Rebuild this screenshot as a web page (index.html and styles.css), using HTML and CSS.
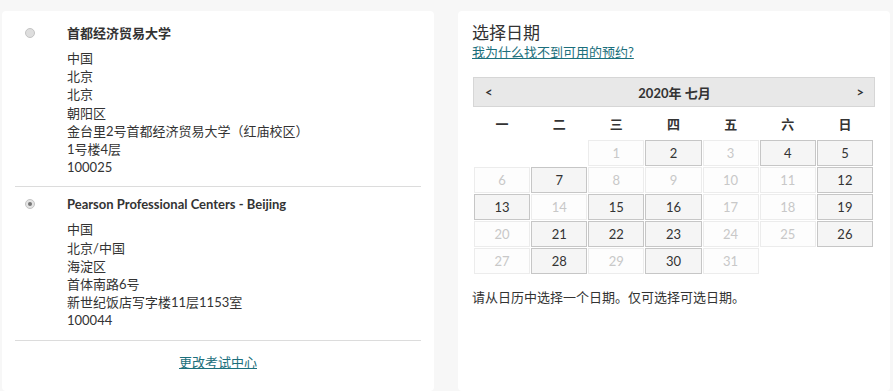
FILE: index.html
```html
<!DOCTYPE html>
<html lang="zh-CN">
<head>
  <meta charset="UTF-8" />
  <meta name="viewport" content="width=device-width, initial-scale=1.0"/>
  <title>选择日期</title>
  <link rel="stylesheet" href="styles.css">
</head>
<body>

  <div class="page">
    <!-- 考试中心 -->
    <div class="panel centers">
      <div class="center-item">
        <span class="radio"></span>
        <div class="center-info">
          <div class="center-name">首都经济贸易大学</div>
          <div class="center-address">
            中国<br>
            北京<br>
            北京<br>
            朝阳区<br>
            金台里2号首都经济贸易大学（红庙校区）<br>
            1号楼4层<br>
            100025
          </div>
        </div>
      </div>

      <div class="center-item second">
        <span class="radio checked"></span>
        <div class="center-info">
          <div class="center-name">Pearson Professional Centers - Beijing</div>
          <div class="center-address">
            中国<br>
            北京/中国<br>
            海淀区<br>
            首体南路6号<br>
            新世纪饭店写字楼11层1153室<br>
            100044
          </div>
        </div>
      </div>

      <div class="change-link"><a href="#">更改考试中心</a></div>
    </div>

    <!-- 日历 -->
    <div class="panel dates">
      <div class="dates-title">选择日期</div>
      <a class="help-link" href="#">我为什么找不到可用的预约?</a>

      <div class="calendar">
        <div class="cal-head">
          <span class="cal-nav">&lt;</span>
          <span class="cal-month">2020年 七月</span>
          <span class="cal-nav">&gt;</span>
        </div>

        <div class="cal-weekdays">
          <span>一</span><span>二</span><span>三</span><span>四</span><span>五</span><span>六</span><span>日</span>
        </div>

        <div class="cal-days">
          <span class="blank"></span><span class="blank"></span>
          <span class="day off">1</span><span class="day">2</span><span class="day off">3</span><span class="day">4</span><span class="day">5</span>
          <span class="day off">6</span><span class="day">7</span><span class="day off">8</span><span class="day off">9</span><span class="day off">10</span><span class="day off">11</span><span class="day">12</span>
          <span class="day">13</span><span class="day off">14</span><span class="day">15</span><span class="day">16</span><span class="day off">17</span><span class="day off">18</span><span class="day">19</span>
          <span class="day off">20</span><span class="day">21</span><span class="day">22</span><span class="day">23</span><span class="day off">24</span><span class="day off">25</span><span class="day">26</span>
          <span class="day off">27</span><span class="day">28</span><span class="day off">29</span><span class="day">30</span><span class="day off">31</span>
        </div>
      </div>

      <p class="cal-hint">请从日历中选择一个日期。仅可选择可选日期。</p>
    </div>
  </div>

</body>
</html>
```

FILE: styles.css
```css
body {
  margin: 0;
  background: #f7f7f7;
  font-family: 'Lato', 'Noto Sans CJK SC', sans-serif;
  font-size: 13px;
  color: #333;
  overflow: hidden;
}

a {
  color: #1b6f7c;
  text-decoration: underline;
}

.page {
  display: flex;
  gap: 24px;
  padding: 11px 0 0 2px;
}

.panel {
  width: 432px;
  height: 380px;
  box-sizing: border-box;
  background: white;
  border-radius: 4px;
}

/* 左侧：考试中心 */
.centers {
  padding: 4px 13px 0;
}

.center-item {
  display: flex;
  padding: 9px 0 10px;
  border-bottom: 1px solid #dcdcdc;
}

.center-item.second {
  padding-top: 8px;
}

.radio {
  flex: none;
  width: 10px;
  height: 10px;
  box-sizing: border-box;
  margin: 4px 32px 0 10px;
  border-radius: 50%;
  border: 1px solid #c4c4c4;
  background: #dedede;
  position: relative;
}

.radio.checked {
  background: #e4e4e4;
}

.radio.checked::after {
  content: "";
  position: absolute;
  left: 2px;
  top: 2px;
  width: 4px;
  height: 4px;
  border-radius: 50%;
  background: #777;
}

.center-name {
  font-weight: bold;
  line-height: 18px;
  margin-bottom: 7px;
}

.center-address {
  line-height: 18.2px;
}

.change-link {
  text-align: center;
  padding-top: 12px;
  line-height: 18px;
}

/* 右侧：日历 */
.dates {
  padding: 12px 15px 0 14px;
}

.dates-title {
  font-size: 17px;
  line-height: 20px;
}

.help-link {
  display: block;
  width: fit-content;
  line-height: 18px;
}

.calendar {
  margin: 16px 0 0 1px;
}

.cal-head {
  display: flex;
  align-items: center;
  justify-content: space-between;
  height: 30px;
  box-sizing: border-box;
  padding: 0 10px 0 11px;
  background: #e8e8e8;
  border: 1px solid #d6d6d6;
  font-weight: bold;
}

.cal-weekdays,
.cal-days {
  display: grid;
  grid-template-columns: repeat(7, 1fr);
  gap: 1px;
  padding: 0 2px 0 1px;
}

.cal-weekdays {
  height: 32px;
  align-items: center;
  text-align: center;
  font-weight: bold;
}

.cal-days {
  margin-top: 1px;
}

.day {
  height: 26px;
  box-sizing: border-box;
  display: flex;
  align-items: center;
  justify-content: center;
  background: #f5f5f5;
  border: 1px solid #c6c6c6;
  color: #333;
}

.day.off {
  background: #fdfdfd;
  border-color: #ececec;
  color: #c8c8c8;
}

.cal-hint {
  margin: 14px 0 0;
  line-height: 18px;
}
```
